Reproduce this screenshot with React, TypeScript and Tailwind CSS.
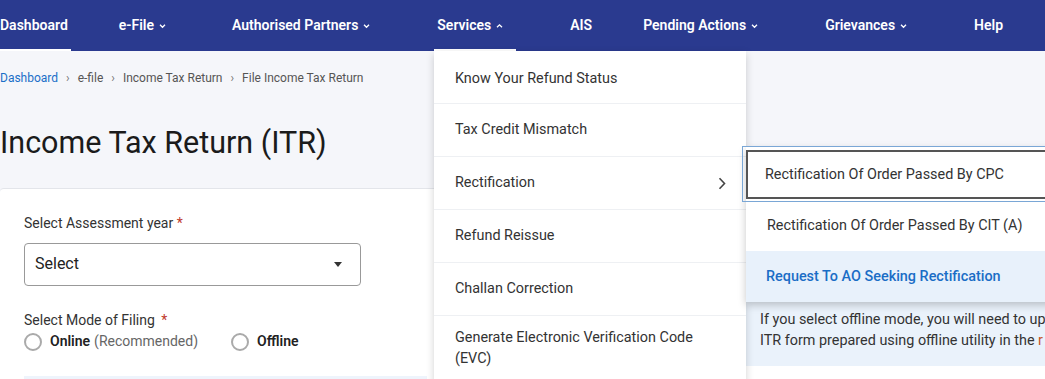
function Caret({ up = false }: { up?: boolean }): JSX.Element {
  return (
    <svg width="7" height="6" viewBox="0 0 7 6" className="ml-[5px]">
      <path
        d={up ? 'M1 4.3 L3.5 1.8 L6 4.3' : 'M1 1.8 L3.5 4.3 L6 1.8'}
        fill="none"
        stroke="white"
        strokeWidth="1.3"
      />
    </svg>
  )
}

const navItems = [
  { label: 'Dashboard', ml: 'ml-0', line: '-right-[3px] left-0' },
  { label: 'e-File', ml: 'ml-[51px]', caret: true },
  { label: 'Authorised Partners', ml: 'ml-[66px]', caret: true },
  { label: 'Services', ml: 'ml-[67px]', caret: true, up: true, line: '-left-[3px] -right-[13px]' },
  { label: 'AIS', ml: 'ml-[67px]' },
  { label: 'Pending Actions', ml: 'ml-[51px]', caret: true },
  { label: 'Grievances', ml: 'ml-[67px]', caret: true },
  { label: 'Help', ml: 'ml-[67px]' },
]

const services = [
  'Know Your Refund Status',
  'Tax Credit Mismatch',
  'Rectification',
  'Refund Reissue',
  'Challan Correction',
]

function App(): JSX.Element {
  return (
    <div className="relative w-[1045px] h-[379px] overflow-hidden bg-[#f5f6fa] font-['Roboto',sans-serif] text-[#333]">
      <nav className="flex h-[51px] bg-[#2a3a8f] text-white">
        {navItems.map((item) =>
          <div
            key={item.label}
            className={`${item.ml} relative flex items-center text-[14px] font-semibold whitespace-nowrap`}
          >
            {item.label}
            {item.caret && <Caret up={item.up} />}
            {item.line && <span className={`absolute ${item.line} bottom-0 h-[2px] bg-white`} />}
          </div>
        )}
      </nav>

      <div className="flex items-center h-[13px] mt-[20px] text-[12px] text-[#555]">
        <span className="text-[#1b6fc8]">Dashboard</span>
        <span className="mx-[8px] text-[#777]">›</span>
        <span>e-file</span>
        <span className="mx-[8px] text-[#777]">›</span>
        <span>Income Tax Return</span>
        <span className="mx-[8px] text-[#777]">›</span>
        <span>File Income Tax Return</span>
      </div>

      <h1 className="mt-[39px] h-[40px] leading-[40px] text-[30.5px] font-normal text-[#1b1b1b]">
        Income Tax Return (ITR)
      </h1>

      <div className="flex mt-[25px] h-[300px] bg-white border-t border-[#e3e5ea] rounded-tl-[4px]">
        <div className="w-[430px] shrink-0 px-[24px] pt-[24px]">
          <div className="h-[20px] leading-[20px] text-[14px] text-[#333]">
            Select Assessment year <span className="text-[#c0392b]">*</span>
          </div>
          <div className="mt-[10px] flex items-center justify-between w-[337px] h-[43px] border border-[#999] rounded-[4px] pl-[10px] pr-[10px] pb-[2px]">
            <span className="text-[16px] text-[#222]">Select</span>
            <svg width="8" height="5" viewBox="0 0 8 5" className="mr-[8px] mt-[2px]">
              <path d="M0 0 L8 0 L4 5 Z" fill="#333" />
            </svg>
          </div>
          <div className="mt-[24px] h-[20px] leading-[20px] text-[14px] text-[#333]">
            Select Mode of Filing <span className="ml-[3px] text-[#c0392b]">*</span>
          </div>
          <div className="flex items-center h-[22px] text-[14px] pt-[1px]">
            <span className="w-[18px] h-[18px] rounded-full border-2 border-[#aaa] bg-white" />
            <span className="ml-[8px] font-semibold text-[#222]">Online</span>
            <span className="ml-[4px] text-[#666]">(Recommended)</span>
            <span className="ml-[33px] w-[18px] h-[18px] rounded-full border-2 border-[#aaa] bg-white" />
            <span className="ml-[8px] font-semibold text-[#222]">Offline</span>
          </div>
          <div className="mt-[24px] w-[403px] h-[10px] bg-[#eef4fc]" />
        </div>
        <div className="flex-1 pl-[316px] pt-[100px]">
          <div className="h-[77px] bg-[#eaf2fb] pl-[14px] pt-[20px] text-[14.4px] leading-[21px] text-[#333] whitespace-nowrap overflow-hidden">
            <div>If you select offline mode, you will need to upload</div>
            <div>ITR form prepared using offline utility in the <span className="text-[#c5551f]">r</span></div>
          </div>
        </div>
      </div>

      {/* Services dropdown */}
      <div className="absolute left-[434px] top-[51px] w-[312px] bg-white shadow-[0_3px_8px_rgba(0,0,0,0.18)] text-[14.4px]">
        {services.map((s, i) =>
          <div
            key={s}
            className={`flex items-center justify-between h-[53px] px-[21px] border-b border-[#eef0f3] text-[#333] ${i === 0 ? 'pt-[3px]' : ''}`}
          >
            <span>{s}</span>
            {s === 'Rectification' &&
              <svg width="8" height="13" viewBox="0 0 8 13" className="-mr-[1px]">
                <path d="M1.5 1.2 L6.5 6.5 L1.5 11.8" fill="none" stroke="#444" strokeWidth="1.6" />
              </svg>
            }
          </div>
        )}
        <div className="px-[21px] pt-[11px] pb-[14px] leading-[21px] text-[#333]">
          Generate Electronic Verification Code (EVC)
        </div>
      </div>

      {/* Rectification submenu */}
      <div className="absolute left-[746px] top-[147px] w-[320px] bg-white shadow-[0_3px_8px_rgba(0,0,0,0.22)] text-[14.4px]">
        <div className="relative flex items-center h-[52px] pl-[19px] pt-[4px] text-[#333]">
          <span className="absolute -left-[4px] -top-[1px] right-0 -bottom-[3px] border border-[#7aa7d6]" />
          <span className="absolute left-0 top-[3px] right-0 bottom-0 border-2 border-[#555]" />
          Rectification Of Order Passed By CPC
        </div>
        <div className="flex items-center h-[52px] pl-[21px] pt-[1px] text-[#333]">
          Rectification Of Order Passed By CIT (A)
        </div>
        <div className="flex items-center h-[51px] pl-[20px] pt-[1px] bg-[#e8f1fb] text-[#1a6dc6] font-medium">
          Request To AO Seeking Rectification
        </div>
      </div>
    </div>
  )
}

export default App
